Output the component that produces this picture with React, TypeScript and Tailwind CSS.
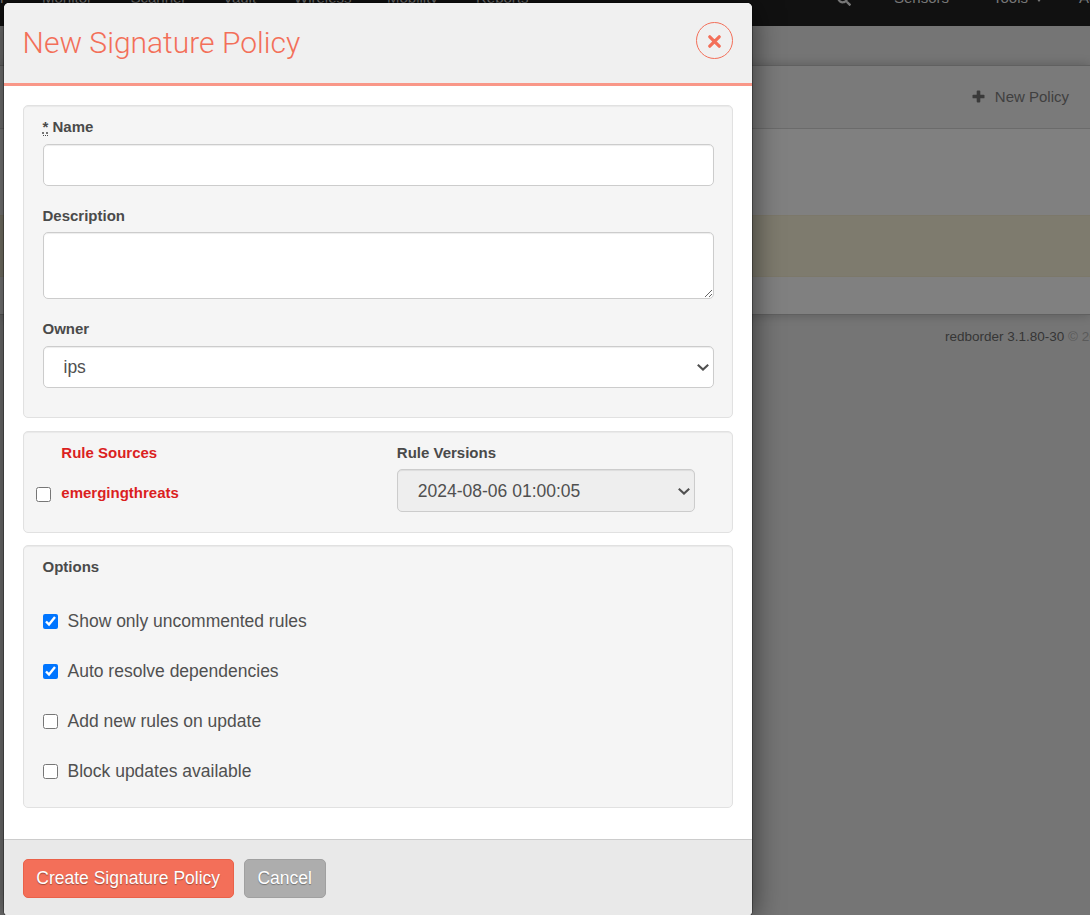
import React from "react";
import { FaSearch } from "react-icons/fa";

const panel =
  "rounded-[5px] border border-[#e1e1e1] bg-[#f5f5f5] shadow-[inset_0_1px_1px_rgba(0,0,0,0.05)]";
const field =
  "block w-full rounded-[5px] border border-[#ccc] bg-white shadow-[inset_0_1px_1px_rgba(0,0,0,0.075)] outline-none";
const label = "block text-[15px] leading-[25px] font-bold text-[#4a4a4a]";

const options = [
  { text: "Show only uncommented rules", checked: true },
  { text: "Auto resolve dependencies", checked: true },
  { text: "Add new rules on update", checked: false },
  { text: "Block updates available", checked: false },
];

function Chevron() {
  return (
    <svg
      className="pointer-events-none absolute top-1/2 right-[5px] mt-[-3px] h-[7px] w-[12px]"
      viewBox="0 0 12 7"
      fill="none"
      stroke="#505050"
      strokeWidth="2.1"
    >
      <path d="M0.8 0.8 L6 5.6 L11.2 0.8" />
    </svg>
  );
}

function Background() {
  return (
    <div className="flex h-[915px] w-full flex-col bg-[#757575]">
      <nav className="h-[26px] shrink-0 overflow-hidden bg-[#111]">
        <div className="mt-[-12px] flex h-5 items-center text-[15px] leading-5 whitespace-nowrap text-[#777] *:shrink-0">
          <span className="w-[42px]">r</span>
          <span className="w-[88.5px]">Monitor</span>
          <span className="w-[92.5px]">Scanner</span>
          <span className="w-[71px]">Vault</span>
          <span className="w-[93px]">Wireless</span>
          <span className="w-[89px]">Mobility</span>
          <span className="w-[361px]">Reports</span>
          <span className="w-[57px]">
            <FaSearch className="mt-px h-[14px] w-[14px]" />
          </span>
          <span className="w-[99px]">Sensors</span>
          <span className="w-[43px]">Tools</span>
          <svg className="mt-[4px] mr-[37px] h-[4px] w-[6px]" viewBox="0 0 6 4" fill="#777">
            <path d="M0 0 H6 L3 4 Z" />
          </svg>
          <span>Ad</span>
        </div>
      </nav>
      <div className="h-[39px] shrink-0" />
      <section className="shrink-0 border-y border-[#606060] bg-[#808080] shadow-[0_0_10px_rgba(0,0,0,0.22)]">
        <header className="flex h-[63px] items-center justify-end border-b border-[#6b6b6b] bg-[#7a7a7a] pr-[21px] text-[15px] text-[#404040]">
          <svg className="mr-[10px] mb-[2px] h-[13px] w-[13px]" viewBox="0 0 13 13" fill="#3a3a3a">
            <rect x="0.5" y="4.7" width="12" height="3.6" rx="0.9" />
            <rect x="4.7" y="0.5" width="3.6" height="12" rx="0.9" />
          </svg>
          <span>New Policy</span>
        </header>
        <div className="h-[86px]" />
        <div className="h-[62px] border-y border-[#7c786a] bg-[#7e7b6e]" />
        <div className="h-[37px]" />
      </section>
      <footer className="ml-[945px] pt-[12px] text-[13.5px] leading-5 whitespace-nowrap text-[#5a5a5a]">
        <span className="text-[#363636]">redborder 3.1.80-30</span> © 2024
      </footer>
    </div>
  );
}

export default function App() {
  return (
    <main className="relative h-[915px] w-full overflow-hidden font-['Liberation_Sans',Arial,sans-serif]">
      <Background />
      <div
        role="dialog"
        className="absolute top-[3px] left-[4px] flex h-[913px] w-[748px] flex-col overflow-hidden rounded-[5px] bg-white shadow-[0_0_0_1px_rgba(0,0,0,0.3),0_4px_30px_rgba(0,0,0,0.6)]"
      >
        <header className="flex h-[83px] shrink-0 justify-between border-b-[3px] border-[#f99788] bg-[#f0f0f0] pr-[19px] pl-[18.6px]">
          <h3 className="pt-[20px] font-['Roboto',sans-serif] text-[30px] leading-[40px] font-light text-[#f36f59]">
            New Signature Policy
          </h3>
          <button
            aria-label="Close"
            className="mt-[19px] flex h-[37px] w-[37px] items-center justify-center rounded-full border border-[#f36f59] text-[#f36f59]"
          >
            <svg className="mt-[2px] h-[13px] w-[13px]" viewBox="0 0 13 13" fill="none" stroke="currentColor" strokeWidth="3.2" strokeLinecap="round">
              <path d="M1.8 1.8 L11.2 11.2 M11.2 1.8 L1.8 11.2" />
            </svg>
          </button>
        </header>

        <form className="flex flex-1 flex-col px-[19px] pt-[19px]">
          <section className={`${panel} h-[313px] pr-[18px] pl-[18.5px] pt-[8px]`}>
            <label className={label}>
              <abbr title="required" className="border-b border-dotted border-[#4a4a4a] underline decoration-dotted">
                *
              </abbr>{" "}
              Name
            </label>
            <input type="text" className={`${field} mt-[5px] h-[42px]`} />
            <label className={`${label} mt-[17px]`}>Description</label>
            <textarea className={`${field} mt-[4px] h-[67px] resize`} />
            <label className={`${label} mt-[17px]`}>Owner</label>
            <div className="relative mt-[5px]">
              <select className={`${field} h-[42px] appearance-none px-[20px] text-[17.5px] text-[#505050]`}>
                <option>ips</option>
              </select>
              <Chevron />
            </div>
          </section>

          <section className={`${panel} mt-[13px] flex h-[102px] px-[13px] pt-[8px]`}>
            <div className="w-[359.8px]">
              <div className="pl-[24.3px] text-[15px] leading-[25px] font-bold text-[#db1f1f]">Rule Sources</div>
              <label className="mt-[15px] flex items-center text-[15px] leading-[25px] font-bold text-[#db1f1f]">
                <input type="checkbox" className="mt-[3px] mr-[9.9px] ml-[-0.6px] h-[15px] w-[15px]" />
                emergingthreats
              </label>
            </div>
            <div className="w-[298px]">
              <label className={label}>Rule Versions</label>
              <div className="relative mt-[4px]">
                <select
                  disabled
                  className="block h-[43px] w-full appearance-none rounded-[5px] border border-[#ccc] bg-[#eee] px-[20px] pt-px text-[17.5px] text-[#505050] opacity-100 shadow-[inset_0_1px_1px_rgba(0,0,0,0.075)]"
                >
                  <option>2024-08-06 01:00:05</option>
                </select>
                <Chevron />
              </div>
            </div>
          </section>

          <section className={`${panel} mt-[12px] h-[263px] pr-[18px] pl-[18.5px] pt-[8px]`}>
            <div className={label}>Options</div>
            <div className="mt-[30px] flex flex-col gap-[25px]">
              {options.map((option) => (
                <label key={option.text} className="flex items-center text-[17.5px] leading-[25px] text-[#505050]">
                  <input
                    type="checkbox"
                    defaultChecked={option.checked}
                    className="mt-[-1px] mr-[10px] h-[15px] w-[15px]"
                  />
                  {option.text}
                </label>
              ))}
            </div>
          </section>
        </form>

        <footer className="flex h-[77px] shrink-0 gap-[10px] border-t border-[#ccc] bg-[#e9e9e9] px-[19px] pt-[19px] text-[17.5px] text-white">
          <button className="h-[39px] w-[211px] rounded-[5px] border border-[#ea6149] bg-[#f36f59] pr-[0.6px] [text-shadow:0_1px_1px_rgba(0,0,0,0.35)]">
            Create Signature Policy
          </button>
          <button className="h-[39px] w-[82px] rounded-[5px] border border-[#a0a0a0] bg-[#adadad] pr-[0.6px] [text-shadow:0_1px_1px_rgba(0,0,0,0.35)]">
            Cancel
          </button>
        </footer>
      </div>
    </main>
  );
}
